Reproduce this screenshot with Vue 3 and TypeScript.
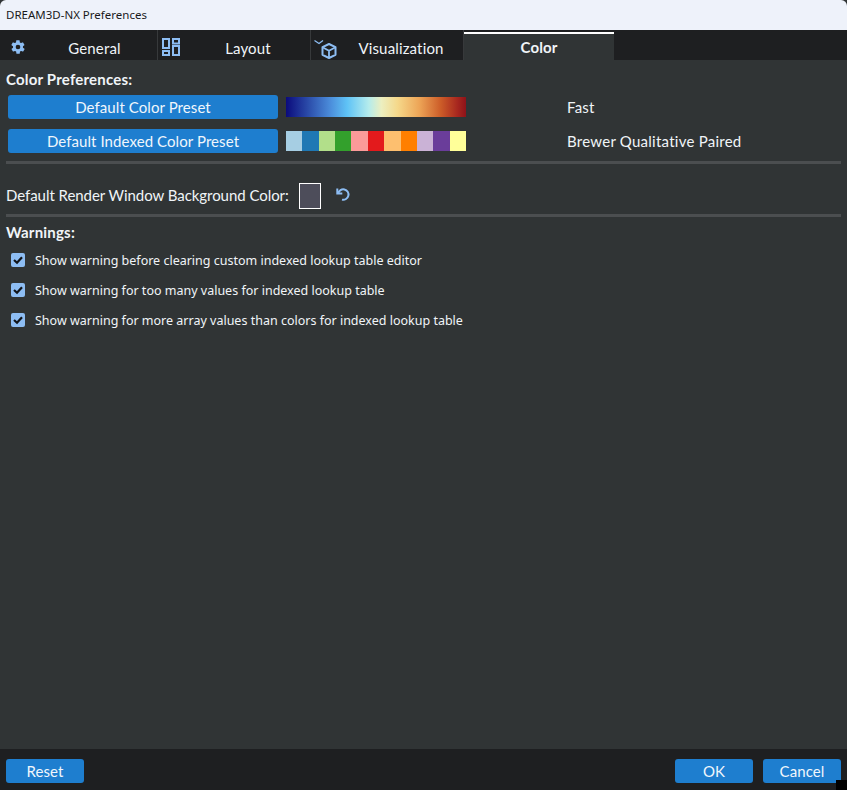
<script setup lang="ts">
const brewer: string[] = ['#a6cee3','#1f78b4','#b2df8a','#33a02c','#fb9a99','#e31a1c','#fdbf6f','#ff7f00','#cab2d6','#6a3d9a','#ffff99']
const warnings: string[] = [
  'Show warning before clearing custom indexed lookup table editor',
  'Show warning for too many values for indexed lookup table',
  'Show warning for more array values than colors for indexed lookup table',
]
</script>

<template>
  <div class="window">
    <header class="titlebar">DREAM3D-NX Preferences</header>

    <nav class="tabs">
      <div class="tab wide">
        <span class="tab-icon">
          <svg width="16" height="16" viewBox="0 0 24 24" class="gear"><path fill="#8dbdf3" fill-rule="evenodd" d="M19.4 13c.1-.3.1-.7.1-1s0-.7-.1-1l2.1-1.6c.2-.2.2-.4.1-.6l-2-3.5c-.1-.2-.4-.3-.6-.2l-2.5 1c-.5-.4-1.100-.7-1.700-1l-.4-2.600c0-.3-.2-.5-.5-.5h-4c-.3 0-.5.2-.5.400l-.4 2.700c-.6.200-1.200.600-1.700 1l-2.500-1c-.2-.1-.5 0-.6.200l-2 3.500c-.1.200-.1.500.1.600L4.600 11c-.1.300-.1.700-.1 1s0 .700.1 1l-2.100 1.600c-.2.200-.2.400-.1.600l2 3.500c.1.200.4.300.6.200l2.500-1c.5.400 1.100.700 1.700 1l.4 2.700c0 .2.2.4.500.4h4c.3 0 .5-.2.500-.4l.4-2.700c.6-.3 1.200-.6 1.700-1l2.500 1c.2.100.5 0 .6-.2l2-3.500c.1-.2.100-.4-.1-.6L19.400 13zM12 15.500a3.500 3.500 0 1 1 0-7 3.500 3.500 0 0 1 0 7z"/></svg>
        </span>
        <span class="tab-label">General</span>
      </div>
      <div class="tab">
        <span class="tab-icon">
          <svg width="20" height="20" viewBox="0 0 20 20" class="layout" fill="none" stroke="#8dbdf3" stroke-width="2"><rect x="2" y="2" width="6" height="9"/><rect x="12" y="2" width="6" height="4.500"/><rect x="2" y="14" width="6" height="4"/><rect x="12" y="9" width="6" height="9"/></svg>
        </span>
        <span class="tab-label">Layout</span>
      </div>
      <div class="tab">
        <span class="tab-icon">
          <svg width="24" height="22" viewBox="0 0 24 22" class="cube" fill="none" stroke="#8dbdf3"><path d="M0.500 1.500L5 4.500 9 1.500" stroke-width="1.300"/><path d="M15 5l6.500 3.200v7.600L15 19l-6.500-3.200V8.200z" stroke-width="2" stroke-linejoin="round"/><path d="M9 8.500l6 3.200 6-3.200M15 11.700V18.500" stroke-width="1.800"/></svg>
        </span>
        <span class="tab-label">Visualization</span>
      </div>
      <div class="tab active">Color</div>
    </nav>

    <main class="content">
      <h2 class="heading">Color Preferences:</h2>
      <div class="preset-row">
        <button class="btn preset-btn">Default Color Preset</button>
        <div class="gradient"></div>
        <span class="preset-name">Fast</span>
      </div>
      <div class="preset-row second">
        <button class="btn preset-btn">Default Indexed Color Preset</button>
        <div class="swatches">
          <span v-for="c in brewer" :key="c" class="swatch" :style="{ background: c }"></span>
        </div>
        <span class="preset-name">Brewer Qualitative Paired</span>
      </div>

      <div class="divider first-divider"></div>

      <div class="bg-row">
        <span class="bg-label">Default Render Window Background Color:</span>
        <span class="color-box"></span>
        <svg class="undo" width="16" height="16" viewBox="0 0 16 16" fill="none" stroke="#8dbdf3" stroke-width="2"><path d="M3.200 7.500A5.200 5.200 0 1 1 7 13.600"/><path d="M2.300 2.500v5h5" stroke-linejoin="miter"/></svg>
      </div>

      <div class="divider"></div>

      <h2 class="heading warn-heading">Warnings:</h2>
      <ul class="warnings">
        <li v-for="w in warnings" :key="w" class="warning">
          <span class="check">
            <svg width="14" height="14" viewBox="0 0 14 14" fill="none" stroke="#10141a" stroke-width="2.200"><path d="M3 7l3 2.800 5-5.600"/></svg>
          </span>
          <span>{{ w }}</span>
        </li>
      </ul>
    </main>

    <footer class="footer">
      <button class="btn foot-btn">Reset</button>
      <div class="foot-right">
        <button class="btn foot-btn">OK</button>
        <button class="btn foot-btn">Cancel</button>
      </div>
      <span class="grip"></span>
    </footer>
  </div>
</template>

<style scoped>
.window {
  position: relative;
  width: 847px;
  height: 790px;
  display: flex;
  flex-direction: column;
  background: #303435;
  color: #f0f4f8;
  font-family: Lato, sans-serif;
  font-size: 15px;
  overflow: hidden;
}
.titlebar {
  height: 30px;
  flex: none;
  background: #eef2fa;
  color: #1a1a1a;
  font-family: "Noto Sans", sans-serif;
  font-size: 11.500px;
  line-height: 30px;
  padding-left: 6px;
  border-radius: 6px 6px 0 0;
}
.tabs {
  height: 30px;
  flex: none;
  display: flex;
  background: #1e1f21;
}
.tab {
  width: 153px;
  display: flex;
  align-items: center;
  border-right: 1px solid #37393b;
  box-sizing: border-box;
  height: 30px;
}
.tab.wide { width: 158px; }
.tab.wide .tab-icon { width: 32px; }
.tab-icon {
  width: 28px;
  flex: none;
  height: 30px;
  position: relative;
}
.tab-icon svg { position: absolute; }
.gear { left: 10px; top: 9px; }
.layout { left: 3px; top: 7px; }
.cube { left: 3px; top: 9px; }
.tab-label {
  flex: 1;
  text-align: center;
  padding-top: 5px;
  letter-spacing: 0.15px;
}
.tab.active {
  width: 150px;
  border-right: 0;
  border-top: 2px solid #fff;
  margin-top: 2px;
  height: 28px;
  background: #303435;
  font-weight: 700;
  justify-content: center;
  letter-spacing: 0.1px;
}
.content {
  flex: 1;
  padding: 0 6px;
  min-height: 0;
}
.heading {
  margin: 0;
  font-size: 15px;
  font-weight: 700;
  line-height: 18px;
  padding-top: 10px;
  letter-spacing: 0.2px;
}
.preset-row {
  display: flex;
  align-items: center;
  height: 24px;
  margin-top: 7px;
  padding-left: 2px;
}
.preset-row.second { margin-top: 10px; }
.btn {
  background: #1e7ecf;
  color: #f0f6fc;
  border: 0;
  border-radius: 3px;
  font-family: Lato, sans-serif;
  font-size: 15px;
  letter-spacing: 0.08px;
  padding: 0;
  height: 24px;
}
.preset-btn { width: 270px; flex: none; }
.gradient, .swatches {
  width: 180px;
  height: 20px;
  margin-left: 8px;
  flex: none;
}
.gradient {
  background: linear-gradient(90deg, #0b0b7c 0%, #2a4aa8 12%, #4c8fdc 25%, #5fc3f6 34%, #b5ecec 46%, #ecefc0 53%, #f5d88a 62%, #eda557 74%, #cc5c28 86%, #a8281f 95%, #8e1219 100%);
}
.swatches { display: flex; }
.swatch { flex: 1; }
.preset-name { margin-left: 101px; letter-spacing: 0.25px; }
.divider {
  height: 3px;
  background: #4b4e50;
  width: 835px;
}
.first-divider { margin-top: 8px; }
.bg-row {
  display: flex;
  align-items: center;
  height: 50px;
  padding-top: 14px;
  box-sizing: border-box;
}
.bg-label { letter-spacing: -0.05px; margin-top: -2px; }
.color-box {
  width: 20px;
  height: 24px;
  margin-left: 10px;
  background: #4d4d5a;
  border: 1px solid #fff;
}
.undo { margin-left: 14px; margin-top: -4px; }
.warn-heading { padding-top: 6px; }
.warnings {
  list-style: none;
  margin: 4px 0 0;
  padding: 0;
}
.warning {
  display: flex;
  align-items: center;
  height: 30px;
  font-family: "Noto Sans", sans-serif;
  font-size: 12.500px;
}
.check {
  width: 14px;
  height: 14px;
  margin: 0 10px 0 5px;
  background: #8dbdf3;
  border-radius: 2px;
  display: block;
}
.check svg { display: block; }
.footer {
  height: 41px;
  flex: none;
  background: #1e1f21;
  display: flex;
  justify-content: space-between;
  align-items: flex-start;
  padding: 10px 6px 0;
  box-sizing: border-box;
  position: relative;
}
.foot-right { display: flex; gap: 10px; }
.foot-btn { width: 78px; }
.grip {
  position: absolute;
  right: 0;
  bottom: 0;
  width: 11px;
  height: 10px;
  background: #000;
}
</style>
